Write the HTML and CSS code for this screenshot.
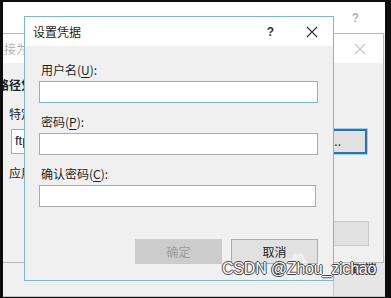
FILE: index.html
```html
<!DOCTYPE html>
<html lang="zh-CN">
<head>
    <meta charset="UTF-8">
    <title>设置凭据</title>
    <link rel="stylesheet" href="styles.css">
</head>
<body>
    <div class="screen">
        <div class="outer-top">
            <span class="help dim">?</span>
        </div>
        <div class="outer-body"></div>
        <div class="outer-footer">
            <div class="outer-btn">取消</div>
        </div>

        <!-- dialog behind -->
        <div class="win back">
            <div class="titlebar">
                <span class="title dim">连接为</span>
                <svg class="close" width="12" height="12" viewBox="0 0 12 12"><path d="M1 1L11 11M11 1L1 11" stroke="#c8c8c8" stroke-width="1.2"/></svg>
            </div>
            <div class="back-body">
                <div class="back-head">路径凭</div>
                <div class="back-opt">特定</div>
                <div class="back-row">
                    <div class="back-input">ftp</div>
                    <div class="back-set">...</div>
                </div>
                <div class="back-opt app">应用</div>
                <div class="back-btns">
                    <div class="back-btn"></div>
                    <div class="back-btn"></div>
                </div>
            </div>
        </div>

        <!-- front dialog -->
        <div class="win front">
            <div class="titlebar">
                <span class="title">设置凭据</span>
                <span class="help">?</span>
                <svg class="close" width="12" height="12" viewBox="0 0 12 12"><path d="M1 1L11 11M11 1L1 11" stroke="#333" stroke-width="1.2"/></svg>
            </div>
            <div class="form">
                <label class="lbl">用户名(<u>U</u>):</label>
                <div class="field focus"></div>
                <label class="lbl">密码(<u>P</u>):</label>
                <div class="field"></div>
                <label class="lbl">确认密码(<u>C</u>):</label>
                <div class="field short"></div>
                <div class="buttons">
                    <div class="btn disabled">确定</div>
                    <div class="btn">取消</div>
                </div>
            </div>
        </div>

        <div class="watermark">
            <svg class="paw" width="26" height="24" viewBox="0 0 26 24">
                <g fill="rgba(255,255,255,0.55)">
                    <ellipse cx="6" cy="9" rx="3" ry="3.5"/>
                    <ellipse cx="11" cy="4" rx="3" ry="3.5"/>
                    <ellipse cx="17" cy="4" rx="3" ry="3.5"/>
                    <ellipse cx="21" cy="10" rx="3" ry="3.5"/>
                    <ellipse cx="13.5" cy="17" rx="6" ry="5"/>
                </g>
            </svg>
            <span class="csdn">CSDN @Zhou_zichao</span>
        </div>
    </div>
</body>
</html>
```

FILE: styles.css
```css
html, body {
    margin: 0;
    padding: 0;
    background: #0d0d0d;
}
body {
    font-family: "Noto Sans CJK SC", "Noto Sans", sans-serif;
    font-size: 12px;
    color: #1e1e1e;
    padding: 2px 6px 1px 3px;
    width: 382px;
    height: 295px;
}
.screen {
    position: relative;
    width: 382px;
    height: 295px;
    overflow: hidden;
    background: #f0f0f0;
    display: flex;
    flex-direction: column;
    border-bottom: 1px solid #c4c4c4;
    box-sizing: border-box;
}
.outer-top {
    height: 31px;
    background: #fff;
    display: flex;
    justify-content: flex-end;
    align-items: center;
    padding-right: 26px;
    flex-shrink: 0;
}
.outer-body {
    flex: 1;
}
.outer-footer {
    height: 40px;
    display: flex;
    justify-content: flex-end;
    margin-right: -10px;
}
.outer-btn {
    width: 62px;
    height: 40px;
    background: #e6e6e6;
    border-left: 1px solid #c8c8c8;
    box-sizing: border-box;
    display: flex;
    align-items: flex-end;
    justify-content: center;
    padding-bottom: 19px;
    font-size: 12px;
    color: #333;
    font-weight: bold;
}
.dim {
    color: #b4b4b4;
}
.help {
    font-family: "Liberation Sans", sans-serif;
    font-weight: bold;
    font-size: 12px;
}

/* windows */
.win {
    position: absolute;
    box-sizing: border-box;
    background: #f0f0f0;
}
.titlebar {
    height: 29px;
    background: #fff;
    display: flex;
    align-items: center;
    padding-left: 8px;
    flex-shrink: 0;
}
.title {
    flex: 1;
    font-size: 12px;
}
.back {
    left: -20px;
    top: 31px;
    width: 401px;
    height: 230px;
    border: 1px solid #b9b9b9;
}
.back .titlebar {
    padding-right: 17px;
}
.back-body {
    padding: 14px 16px 0 13px;
}
.back-head {
    height: 16px;
    line-height: 16px;
    color: #222;
    font-weight: bold;
}
.back-opt {
    margin-top: 13px;
    padding-left: 12px;
    height: 16px;
    line-height: 16px;
}
.back-row {
    display: flex;
    gap: 4px;
    margin-top: 7px;
    padding-left: 14px;
}
.back-input {
    flex: 1;
    height: 25px;
    background: #fff;
    border: 1px solid #adadad;
    box-sizing: border-box;
    padding-left: 3px;
    line-height: 22px;
    font-family: "Liberation Sans", sans-serif;
    font-size: 13px;
}
.back-set {
    width: 96px;
    height: 25px;
    box-sizing: border-box;
    background: #e1e1e1;
    border: 2px solid #2f72a8;
    box-shadow: 0 0 0 1px #9fd0ee;
    text-align: right;
    padding-right: 24px;
    line-height: 19px;
    font-size: 12px;
}
.back-opt.app {
    margin-top: 11px;
}
.back-btns {
    display: flex;
    justify-content: flex-end;
    gap: 8px;
    margin-top: 40px;
    margin-right: -2px;
}
.back-btn {
    width: 76px;
    height: 25px;
    background: #e1e1e1;
    border: 1px solid #c8c8c8;
    box-sizing: border-box;
}

.front {
    left: 21px;
    top: 14px;
    width: 310px;
    height: 265px;
    border: 1px solid #7cb7d6;
    display: flex;
    flex-direction: column;
}
.front .titlebar {
    padding-right: 15px;
    height: 29px;
}
.front .help {
    margin-right: 32px;
    color: #333;
}
.form {
    display: flex;
    flex-direction: column;
    padding: 16px 15px 0 14px;
}
.lbl {
    height: 16px;
    line-height: 16px;
    font-size: 12px;
    margin-left: 2px;
}
.lbl u {
    text-decoration-thickness: 1px;
    text-underline-offset: 2px;
}
.field {
    height: 22px;
    background: #fff;
    border: 1px solid #aaaaaa;
    box-sizing: border-box;
    margin: 3px 0 11px;
}
.field.focus {
    border-color: #7ab6d6;
}
.field.short {
    margin-right: 2px;
}
.buttons {
    display: flex;
    justify-content: flex-end;
    gap: 9px;
    margin-top: 21px;
}
.btn {
    width: 87px;
    height: 25px;
    box-sizing: border-box;
    background: #e1e1e1;
    border: 1px solid #adadad;
    display: flex;
    align-items: center;
    justify-content: center;
    font-size: 12px;
    color: #222;
}
.btn.disabled {
    background: #cccccc;
    border-color: #cccccc;
    color: #9d9d9d;
}

/* watermark overlay */
.watermark {
    position: absolute;
    left: 219px;
    top: 251px;
    width: 160px;
    height: 36px;
    white-space: nowrap;
    pointer-events: none;
}
.paw {
    position: absolute;
    left: 62px;
    top: 0;
}
.csdn {
    position: absolute;
    left: 0;
    top: 7px;
    font-family: "Liberation Sans", sans-serif;
    font-size: 16px;
    color: #fff;
    letter-spacing: -0.2px;
    text-shadow: -1px 0 #444, 1px 0 #444, 0 -1px #444, 0 1px #444;
}
```
